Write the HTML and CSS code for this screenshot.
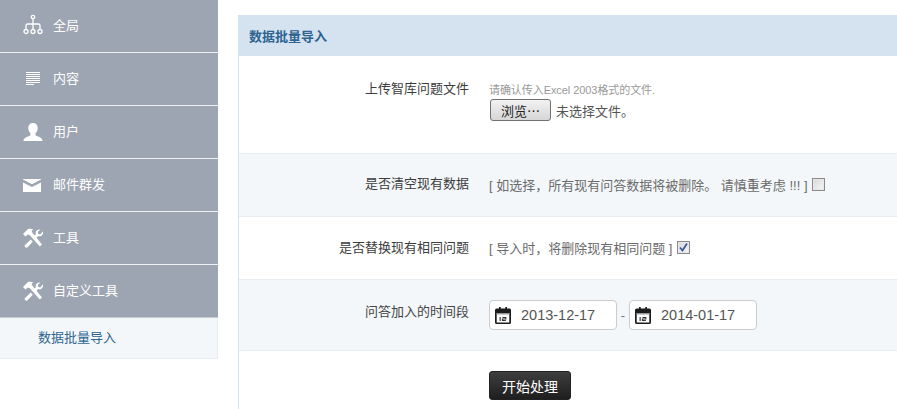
FILE: index.html
```html
<!DOCTYPE html>
<html lang="zh-CN">
<head>
<meta charset="utf-8">
<title>数据批量导入</title>
<link rel="stylesheet" href="styles.css">
</head>
<body>
<div class="page">
  <nav class="sidebar">
    <a class="nav-item">
      <span class="nav-icon"><svg width="20" height="20" viewBox="0 -2 20 20" fill="none" stroke="#fff" stroke-width="1.3"><circle cx="10" cy="1" r="1.700"/><path d="M10 2.800V13M10 8H4.500A1.500 1.500 0 0 0 3 9.500v4M10 8h5.500A1.500 1.500 0 0 1 17 9.500v4"/><circle cx="3" cy="15.500" r="2"/><circle cx="10" cy="15.500" r="2"/><circle cx="17" cy="15.500" r="2"/></svg></span>
      <span>全局</span>
    </a>
    <a class="nav-item">
      <span class="nav-icon"><svg width="20" height="20" viewBox="0 0 20 20" fill="#fff"><path d="M3 5h14v1.100H3zM3 7h14v1.100H3zM3 9h14v1.100H3zM3 11h14v1.100H3zM3 13h14v1.100H3zM3 15h14v1.100H3zM3 17h8v1H3z"/></svg></span>
      <span>内容</span>
    </a>
    <a class="nav-item">
      <span class="nav-icon"><svg width="20" height="20" viewBox="0 -2 20 20" fill="#fff"><path d="M10 1c3 0 4.700 2.200 4.700 5 0 2.300-1 4.200-2.200 5.200v1.500c0 .7 1 1.200 2.500 1.700 2 .7 4.300 1.500 4.600 4.600H.4c.3-3.100 2.600-3.900 4.600-4.600 1.500-.5 2.500-1 2.500-1.700v-1.500C6.300 10.200 5.300 8.300 5.300 6c0-2.800 1.700-5 4.700-5z"/></svg></span>
      <span>用户</span>
    </a>
    <a class="nav-item">
      <span class="nav-icon"><svg width="20" height="20" viewBox="0 -2 20 20" fill="#fff"><path d="M0 4h18v.6L9 9.300 0 4.600zM0 7.400 9 12l9-4.600V17H0z"/></svg></span>
      <span>邮件群发</span>
    </a>
    <a class="nav-item">
      <span class="nav-icon"><svg width="20" height="20" viewBox="0 -2 20 20" fill="#fff"><path d="M0 6 5 1c2.200-.6 3.900-.3 5.500.8l-2 .8.900 2.200 9.600 11.600-2.200 2.100L6.900 7.200 4.800 6.500 2.500 8.500zM20 3.300c.4 2.100-.3 3.800-1.800 4.600-1 .5-2.100.5-3 .2L13 10.500l-2-2.300 1.800-1.900c-.4-1.500 0-3 1.300-4 1-.7 2.100-.9 3.300-.7l-2.600 2.500.5 1.800 1.900.5zM7.800 11.500l2 2.300-5.300 5.500c-.6.500-1.400.5-2.100 0l-.4-.4c-.5-.6-.5-1.400 0-2z"/></svg></span>
      <span>工具</span>
    </a>
    <a class="nav-item">
      <span class="nav-icon"><svg width="20" height="20" viewBox="0 -2 20 20" fill="#fff"><path d="M0 6 5 1c2.200-.6 3.900-.3 5.500.8l-2 .8.900 2.200 9.600 11.600-2.200 2.100L6.900 7.200 4.800 6.500 2.500 8.500zM20 3.300c.4 2.100-.3 3.800-1.800 4.600-1 .5-2.100.5-3 .2L13 10.500l-2-2.300 1.800-1.900c-.4-1.500 0-3 1.300-4 1-.7 2.100-.9 3.300-.7l-2.600 2.500.5 1.800 1.900.5zM7.800 11.500l2 2.300-5.300 5.500c-.6.500-1.400.5-2.100 0l-.4-.4c-.5-.6-.5-1.400 0-2z"/></svg></span>
      <span>自定义工具</span>
    </a>
    <a class="sub-item">数据批量导入</a>
  </nav>

  <main class="main">
    <h1 class="panel-title">数据批量导入</h1>
    <div class="panel-body">
      <div class="row row-upload">
        <label class="row-label">上传智库问题文件</label>
        <div class="row-control stack">
          <span class="hint">请确认传入Excel 2003格式的文件.</span>
          <div class="file-line">
            <button class="file-button" type="button">浏览⋯</button>
            <span class="file-status">未选择文件。</span>
          </div>
        </div>
      </div>
      <div class="row row-clear alt">
        <label class="row-label">是否清空现有数据</label>
        <div class="row-control inline">
          <span class="note">[ 如选择，所有现有问答数据将被删除。 请慎重考虑 !!! ]</span>
          <span class="check"></span>
        </div>
      </div>
      <div class="row row-replace">
        <label class="row-label">是否替换现有相同问题</label>
        <div class="row-control inline">
          <span class="note">[ 导入时，将删除现有相同问题 ]</span>
          <span class="check checked"><svg width="11" height="11" viewBox="0 0 11 11" fill="none" stroke="#3b5a9a" stroke-width="1.800"><path d="M2 5.500 4.500 8.500 9 1.500"/></svg></span>
        </div>
      </div>
      <div class="row row-date alt">
        <label class="row-label">问答加入的时间段</label>
        <div class="row-control inline date-range">
          <div class="date-field">
            <svg width="16" height="17" viewBox="1 0 14 17" preserveAspectRatio="none"><path fill="#1c1c1c" d="M2.500 1.500h2V0h1.500v1.500h4V0h1.500v1.500h2A1.500 1.500 0 0 1 15 3v12.500a1.500 1.500 0 0 1-1.500 1.500h-11A1.500 1.500 0 0 1 1 15.500V3a1.500 1.500 0 0 1 1.500-1.500z"/><rect x="2.500" y="6" width="11" height="9.500" fill="#fff"/><rect x="2.500" y="6" width="11" height="1.500" fill="#999"/><rect x="5" y="10" width="1" height="4" fill="#333"/><path d="M7.500 10.500h3v1.500h-3v1.500h3" fill="none" stroke="#333" stroke-width=".9"/></svg>
            <span class="date-value">2013-12-17</span>
          </div>
          <span class="dash">-</span>
          <div class="date-field">
            <svg width="16" height="17" viewBox="1 0 14 17" preserveAspectRatio="none"><path fill="#1c1c1c" d="M2.500 1.500h2V0h1.500v1.500h4V0h1.500v1.500h2A1.500 1.500 0 0 1 15 3v12.500a1.500 1.500 0 0 1-1.500 1.500h-11A1.500 1.500 0 0 1 1 15.500V3a1.500 1.500 0 0 1 1.500-1.500z"/><rect x="2.500" y="6" width="11" height="9.500" fill="#fff"/><rect x="2.500" y="6" width="11" height="1.500" fill="#999"/><rect x="5" y="10" width="1" height="4" fill="#333"/><path d="M7.500 10.500h3v1.500h-3v1.500h3" fill="none" stroke="#333" stroke-width=".9"/></svg>
            <span class="date-value">2014-01-17</span>
          </div>
        </div>
      </div>
      <div class="row row-submit">
        <span class="row-label"></span>
        <div class="row-control">
          <button class="submit" type="button">开始处理</button>
        </div>
      </div>
    </div>
  </main>
</div>
</body>
</html>
```

FILE: styles.css
```css
* { box-sizing: border-box; }
html, body { margin: 0; height: 100%; overflow: hidden; background: #fff; }
body {
  font-family: "Liberation Sans", "Noto Sans CJK SC", sans-serif;
  font-size: 13px;
  color: #555;
}
.page { display: flex; height: 409px; }

.sidebar { width: 218px; flex: none; display: flex; flex-direction: column; }
.nav-item {
  display: flex;
  align-items: center;
  height: 53px;
  padding: 0 0 4px 23px;
  gap: 10px;
  background: #9ea5b2;
  border-bottom: 1px solid #eef1f5;
  color: #fff;
  font-size: 13px;
}
.nav-item:nth-child(6) { border-bottom-color: #c9ced6; }
.nav-icon { width: 20px; height: 20px; display: flex; }
.nav-icon svg { overflow: visible; }
.sub-item {
  display: flex;
  align-items: center;
  height: 41px;
  padding: 0 0 4px 38px;
  background: #f3f7fa;
  border-right: 1px solid #e6ecf1;
  border-bottom: 1px solid #e6ecf1;
  color: #2e6590;
  font-size: 13px;
}

.main { flex: 1; margin: 15px 0 0 20px; display: flex; flex-direction: column; min-width: 0; }
.panel-title {
  margin: 0;
  height: 41px;
  display: flex;
  align-items: center;
  padding-left: 11px;
  background: #d5e2f0;
  color: #2e6590;
  font-size: 13px;
  font-weight: bold;
}
.panel-body { flex: 1; border-left: 1px solid #d5e2f0; }

.row { display: grid; grid-template-columns: 230px 1fr; column-gap: 20px; border-bottom: 1px solid #e8edf2; }
.alt { background: #f3f7fa; }
.row-label { text-align: right; color: #3c3c3c; line-height: 18px; }
.row-upload { height: 98px; padding-top: 24px; }
.row-clear { height: 63px; align-items: center; padding-bottom: 2px; }
.row-replace { height: 63px; align-items: center; padding-bottom: 1px; }
.row-date { height: 71px; align-items: center; padding-bottom: 6px; }
.row-date .row-control { padding-top: 6px; }
.row-date .row-label { color: #444; }
.row-submit { border-bottom: 0; padding-top: 20px; }

.stack { display: flex; flex-direction: column; }
.hint { font-size: 11px; color: #999; line-height: 18px; padding-top: 1px; letter-spacing: -0.07px; }
.file-line { display: flex; align-items: center; gap: 5px; }
.file-button {
  width: 61px;
  height: 22px;
  margin-left: 1px;
  padding: 0;
  border: 1px solid #707070;
  border-radius: 3px;
  background: linear-gradient(#f2f2f2, #d6d6d6);
  color: #222;
  font: 13px "Liberation Sans", "Noto Sans CJK SC", sans-serif;
}
.file-status { color: #555; }

.inline { display: flex; align-items: center; }
.note { color: #6b6b6b; }
.check {
  width: 13px;
  height: 13px;
  margin-left: 4px;
  border: 1px solid #8a8a8a;
  background: linear-gradient(135deg, #d8d8d8, #f6f6f6);
  box-shadow: inset 0 0 0 1px #e8e8e8;
  display: flex;
}
.checked { margin-left: 5px; }

.date-range { gap: 0; }
.date-field {
  width: 128px;
  height: 30px;
  display: flex;
  align-items: center;
  gap: 10px;
  padding-left: 5px;
  background: #fff;
  border: 1px solid #ccc;
  border-radius: 4px;
}
.date-value { font-size: 14.500px; color: #555; }
.dash { width: 12px; text-align: center; color: #777; }

.submit {
  width: 82px;
  height: 29px;
  padding: 0;
  border: 1px solid #222;
  border-radius: 3px;
  background: linear-gradient(#3e3e3e, #1e1e1e);
  color: #fff;
  font: 14px "Liberation Sans", "Noto Sans CJK SC", sans-serif;
}
```
